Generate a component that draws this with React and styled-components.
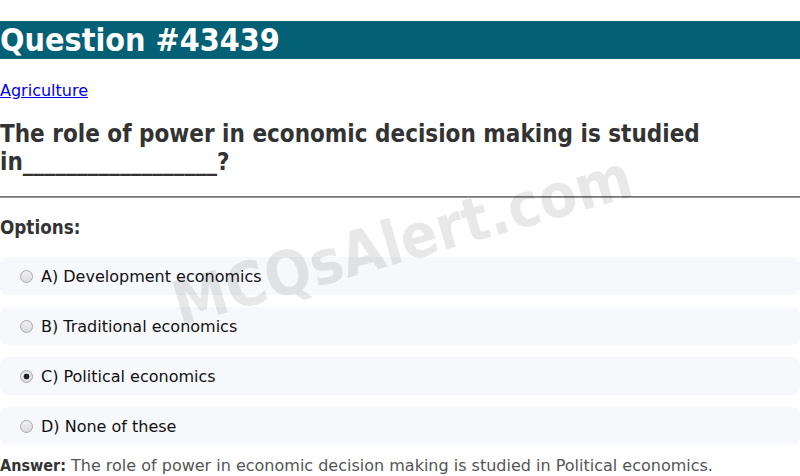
import React from "react";
import styled, { createGlobalStyle } from "styled-components";

const Global = createGlobalStyle`
  html, body { margin: 0; padding: 0; background: #fff; }
  body { font-family: "DejaVu Sans", sans-serif; color: #222; overflow: hidden; }
`;

const Page = styled.div`
  position: relative;
  width: 800px;
  height: 476px;
  overflow: hidden;
`;

const Title = styled.h1`
  margin: 21.44px 0;
  font-family: "DejaVu Sans Condensed", "DejaVu Sans", sans-serif;
  font-weight: bold;
  font-size: 32px;
  line-height: normal;
  color: #fff;
  background: #036075;
`;

const Crumb = styled.p`
  margin: 16px 0;
  font-size: 16px;
  a { color: #0000ee; text-decoration: underline; }
`;

const QuestionText = styled.h2`
  margin: 19.92px 0;
  font-family: "DejaVu Sans Condensed", "DejaVu Sans", sans-serif;
  font-weight: bold;
  font-size: 24px;
  line-height: normal;
  color: #333;
`;

const Rule = styled.hr`
  margin: 8px 0;
  border: none;
  border-top: 1px solid #777;
  border-bottom: 1px solid #999;
`;

const OptionsHead = styled.h3`
  margin: 19.7px 0 18.72px;
  font-family: "DejaVu Sans Condensed", "DejaVu Sans", sans-serif;
  font-weight: bold;
  font-size: 18.72px;
  color: #333;
`;

const OptionList = styled.div`
  display: flex;
  flex-direction: column;
  gap: 12px;
  margin-bottom: 12px;
`;

const Option = styled.label`
  display: flex;
  align-items: center;
  height: 38px;
  box-sizing: border-box;
  padding: 2px 15px 0;
  background: #f7f8fc;
  border-radius: 8px;
  font-size: 16px;
  line-height: 18px;
  color: #111;
`;

const Radio = styled.span`
  box-sizing: border-box;
  flex: none;
  width: 13px;
  height: 13px;
  margin: -2px 8px 0 5px;
  border-radius: 50%;
  border: 1px solid #a8a8a8;
  background: ${p => p.$checked ? "radial-gradient(circle, #222 0 2.6px, #e4e4e4 3.2px)" : "linear-gradient(#f0f0f0, #dcdcdc)"};
`;

const Answer = styled.p`
  margin: 0;
  font-size: 16px;
  line-height: 18.6px;
  color: #555;
`;

const AnswerLabel = styled.b`
  font-family: "DejaVu Sans Condensed", "DejaVu Sans", sans-serif;
  font-weight: bold;
  color: #333;
`;

const Watermark = styled.div`
  position: absolute;
  left: 402px;
  top: 240px;
  transform: translate(-50%, -50%) rotate(-16deg);
  font-family: "DejaVu Sans Condensed", "DejaVu Sans", sans-serif;
  font-weight: bold;
  font-size: 61px;
  color: rgba(0, 0, 0, 0.09);
  white-space: nowrap;
  pointer-events: none;
`;

const options = [
  { key: "A", text: "Development economics" },
  { key: "B", text: "Traditional economics" },
  { key: "C", text: "Political economics", checked: true },
  { key: "D", text: "None of these" },
];

export default function App() {
  return (
    <Page>
      <Global />
      <Title>Question #43439</Title>
      <Crumb><a href="#">Agriculture</a></Crumb>
      <QuestionText>The role of power in economic decision making is studied in__________________?</QuestionText>
      <Rule />
      <OptionsHead>Options:</OptionsHead>
      <OptionList>
        {options.map(o => (
          <Option key={o.key}>
            <Radio $checked={o.checked} />
            {o.key}) {o.text}
          </Option>
        ))}
      </OptionList>
      <Answer><AnswerLabel>Answer:</AnswerLabel> The role of power in economic decision making is studied in Political economics.</Answer>
      <Watermark>MCQsAlert.com</Watermark>
    </Page>
  );
}
